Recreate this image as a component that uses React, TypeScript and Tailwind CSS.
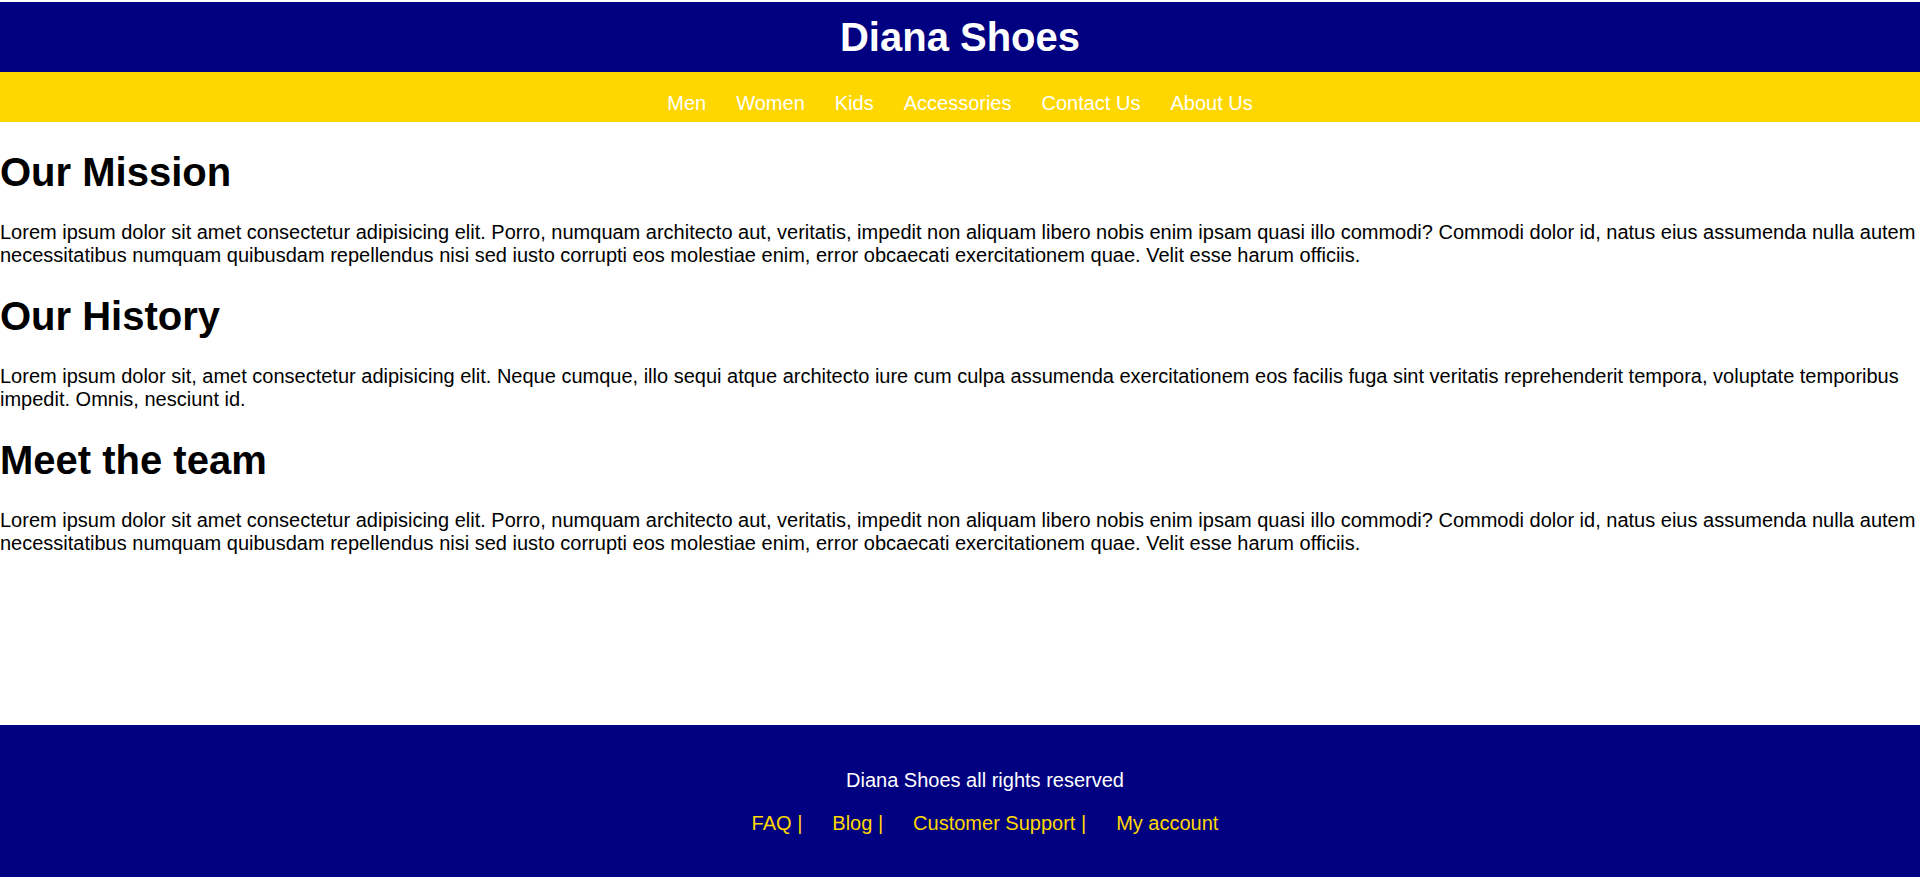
const navLinks = ["Men", "Women", "Kids", "Accessories", "Contact Us", "About Us"];
const footerLinks = ["FAQ |", "Blog |", "Customer Support |", "My account"];

const sections = [
  {
    title: "Our Mission",
    text: "Lorem ipsum dolor sit amet consectetur adipisicing elit. Porro, numquam architecto aut, veritatis, impedit non aliquam libero nobis enim ipsam quasi illo commodi? Commodi dolor id, natus eius assumenda nulla autem necessitatibus numquam quibusdam repellendus nisi sed iusto corrupti eos molestiae enim, error obcaecati exercitationem quae. Velit esse harum officiis.",
  },
  {
    title: "Our History",
    text: "Lorem ipsum dolor sit, amet consectetur adipisicing elit. Neque cumque, illo sequi atque architecto iure cum culpa assumenda exercitationem eos facilis fuga sint veritatis reprehenderit tempora, voluptate temporibus impedit. Omnis, nesciunt id.",
  },
  {
    title: "Meet the team",
    text: "Lorem ipsum dolor sit amet consectetur adipisicing elit. Porro, numquam architecto aut, veritatis, impedit non aliquam libero nobis enim ipsam quasi illo commodi? Commodi dolor id, natus eius assumenda nulla autem necessitatibus numquam quibusdam repellendus nisi sed iusto corrupti eos molestiae enim, error obcaecati exercitationem quae. Velit esse harum officiis.",
  },
];

export default function App() {
  return (
    <div className="flex min-h-screen flex-col bg-white pt-[2px] font-['Liberation_Sans',Arial,sans-serif] text-[20px] leading-[23px] text-black">
      <header className="flex h-[70px] items-center justify-center bg-[#000080]">
        <h1 className="text-[40px] font-bold leading-[46px] text-white">Diana Shoes</h1>
      </header>

      <nav className="h-[50px] bg-[#FFD700] pt-[20px]">
        <ul className="flex justify-center gap-[30px] text-white">
          {navLinks.map((link) => (
            <li key={link}>
              <a href="#">{link}</a>
            </li>
          ))}
        </ul>
      </nav>

      <main className="flex-1 pt-[27px]">
        {sections.map((s) => (
          <section key={s.title} className="mb-[26px]">
            <h2 className="text-[40px] font-bold leading-[46px]">{s.title}</h2>
            <p className="mt-[26px]">{s.text}</p>
          </section>
        ))}
      </main>

      <footer className="bg-[#000080] pt-[44px] pb-[42px] pl-[50px] text-center">
        <p className="text-white">Diana Shoes all rights reserved</p>
        <ul className="mt-[20px] flex justify-center gap-[30px] text-[#FFD700]">
          {footerLinks.map((link) => (
            <li key={link}>
              <a href="#">{link}</a>
            </li>
          ))}
        </ul>
      </footer>
    </div>
  );
}
